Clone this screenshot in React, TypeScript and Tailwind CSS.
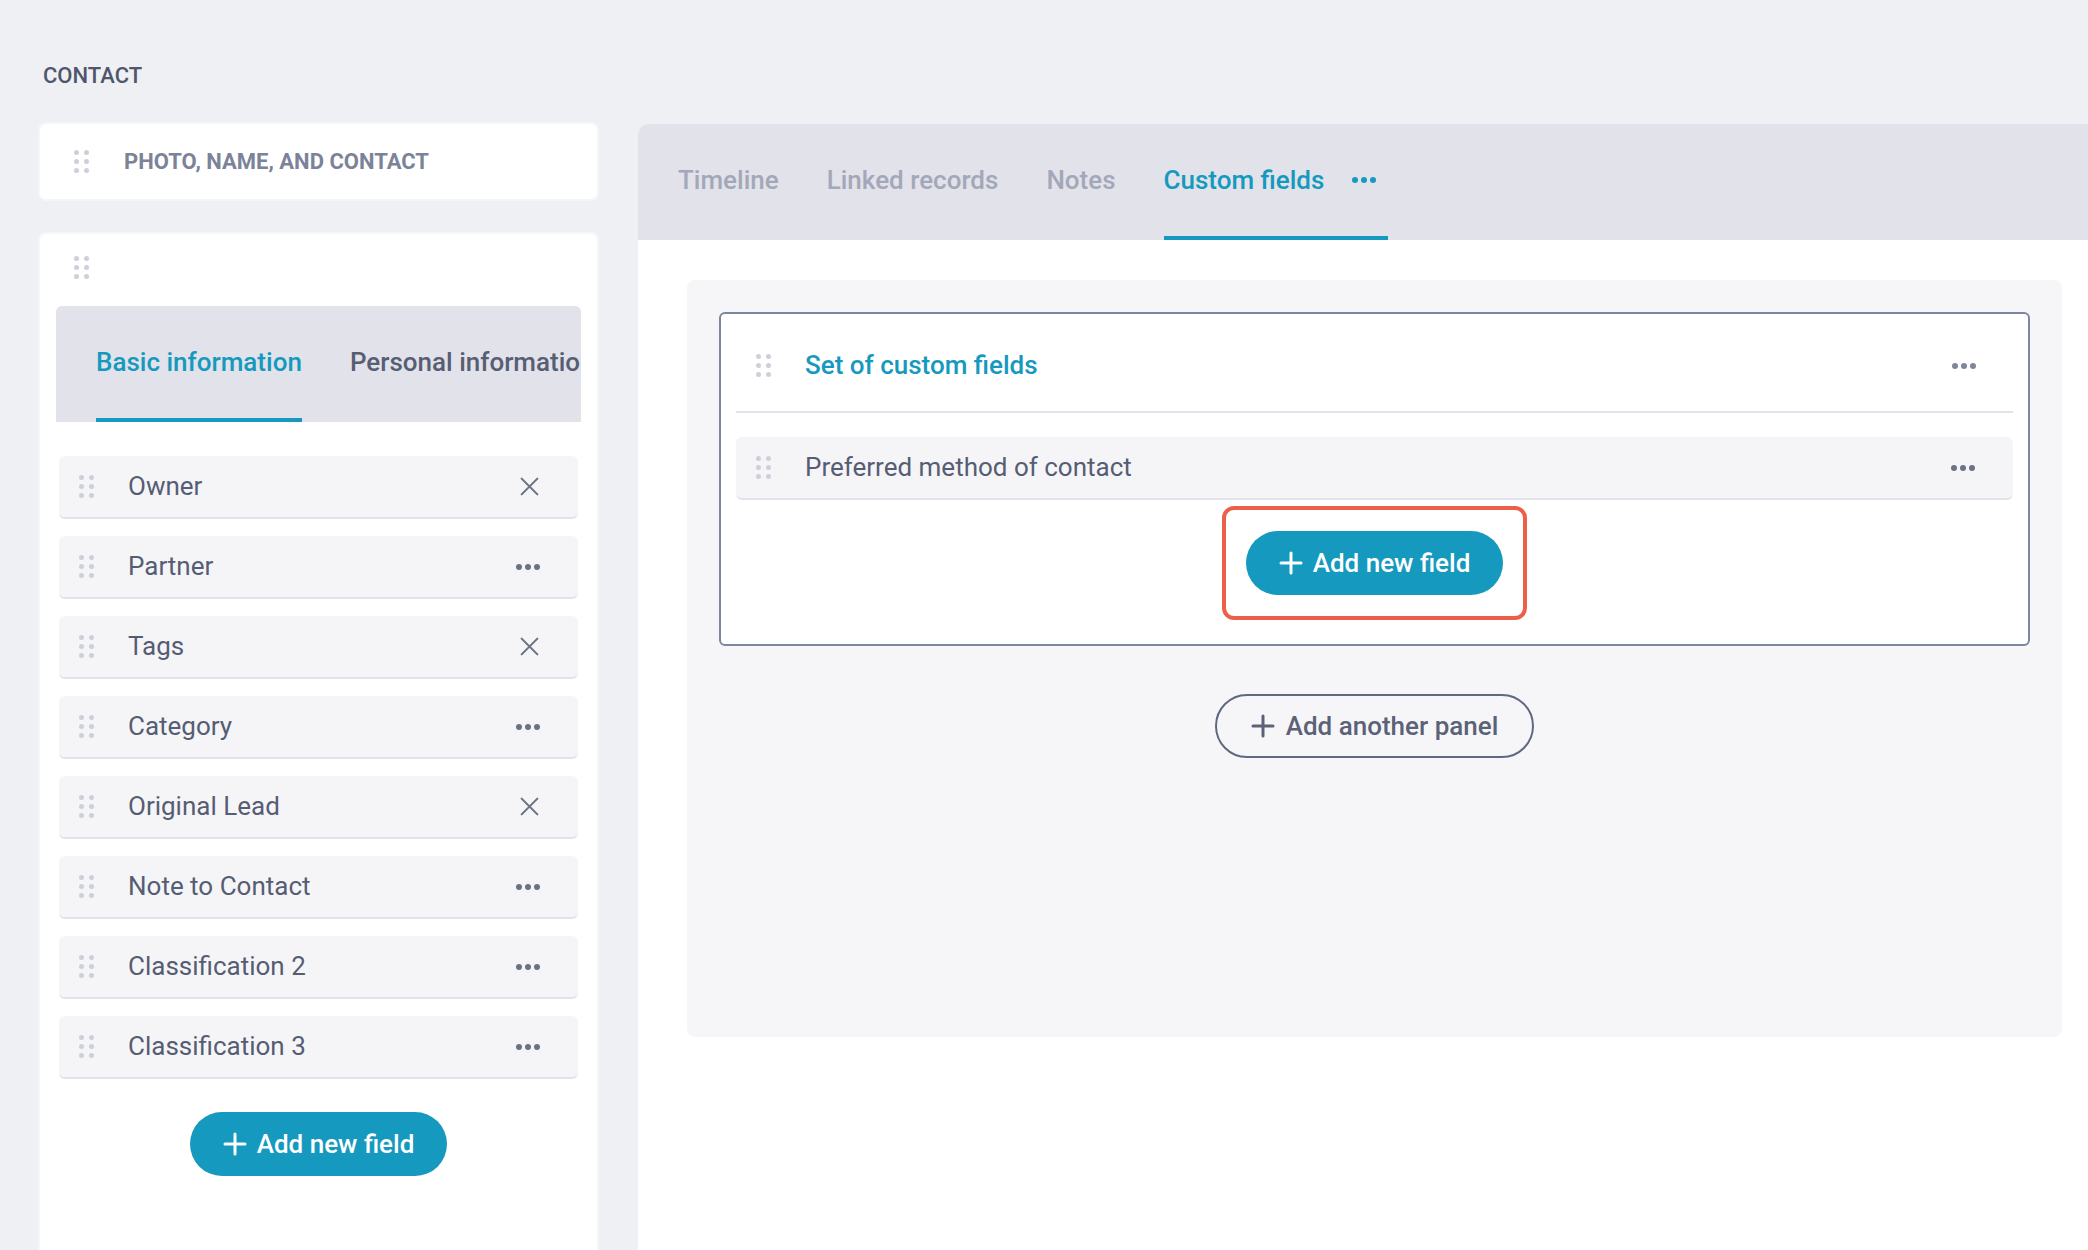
import React from "react";

type FieldAction = "close" | "more";

interface Field {
  label: string;
  action: FieldAction;
}

const basicFields: Field[] = [
  { label: "Owner", action: "close" },
  { label: "Partner", action: "more" },
  { label: "Tags", action: "close" },
  { label: "Category", action: "more" },
  { label: "Original Lead", action: "close" },
  { label: "Note to Contact", action: "more" },
  { label: "Classification 2", action: "more" },
  { label: "Classification 3", action: "more" },
];

// six-dot grip shown on every draggable block
const DragHandle = () => (
  <div className="grid w-fit shrink-0 grid-cols-2 gap-x-[5px] gap-y-[4px]">
    {[0, 1, 2, 3, 4, 5].map((i) => (
      <span key={i} className="block size-[5px] rounded-full bg-[#cdd0da]" />
    ))}
  </div>
);

// horizontal "more" menu dots
const MoreDots = ({ dotClass }: { dotClass: string }) => (
  <div className="flex shrink-0 items-center gap-[3px]">
    {[0, 1, 2].map((i) => (
      <span key={i} className={`block size-[6px] rounded-full ${dotClass}`} />
    ))}
  </div>
);

const CloseIcon = () => (
  <svg width="21" height="21" viewBox="0 0 20 20" fill="none" className="shrink-0">
    <path d="M2.5 2.5 L17.5 17.5 M17.5 2.5 L2.5 17.5" stroke="#6b7187" strokeWidth="2" strokeLinecap="round" />
  </svg>
);

const PlusIcon = ({ color }: { color: string }) => (
  <svg width="24" height="24" viewBox="0 0 24 24" fill="none" className="shrink-0">
    <path d="M12 2 V22 M2 12 H22" stroke={color} strokeWidth="3" strokeLinecap="round" />
  </svg>
);

const AddFieldButton = () => (
  <button className="flex h-16 items-center gap-[10px] rounded-full bg-[#1599be] px-[33px] text-[26px] font-medium text-white">
    <PlusIcon color="#ffffff" />
    <span>Add new field</span>
  </button>
);

const FieldRow = ({ field }: { field: Field }) => (
  <div className="flex h-[63px] items-center rounded-md border-b-2 border-[#e2e3ea] bg-[#f5f5f8] pl-5 pr-[38px]">
    <DragHandle />
    <span className="ml-[34px] flex-1 truncate text-[26px] text-[#565d73]">{field.label}</span>
    {field.action === "close" ? <CloseIcon /> : <MoreDots dotClass="bg-[#6b7288]" />}
  </div>
);

const LayoutColumn = () => (
  <div className="flex w-[557px] shrink-0 flex-col">
    <h2 className="mb-[36px] ml-[3px] h-[25px] text-[22px] font-medium leading-[25px] text-[#4f566b]">CONTACT</h2>

    <div className="flex h-[75px] shrink-0 items-center gap-[35px] rounded-md bg-white pl-[34px] shadow-[0_0_0_2px_#f5f6f9]">
      <DragHandle />
      <span className="text-[22px] font-bold text-[#7c8398]">PHOTO, NAME, AND CONTACT</span>
    </div>

    <div className="mt-[35px] flex-1 rounded-t-md bg-white px-4 pt-[22px] shadow-[0_0_0_2px_#f5f6f9]">
      <div className="pl-[18px]">
        <DragHandle />
      </div>

      {/* section tabs */}
      <div className="mt-[27px] flex h-[116px] gap-12 overflow-hidden rounded-t-md bg-[#e1e2ea] pl-10">
        <div className="flex shrink-0 items-center whitespace-nowrap border-b-4 border-[#1599be] text-[26px] font-medium text-[#1599be]">
          Basic information
        </div>
        <div className="flex shrink-0 items-center whitespace-nowrap border-b-4 border-transparent text-[26px] font-medium text-[#575e74]">
          Personal information
        </div>
      </div>

      <div className="mt-[34px] flex flex-col gap-[17px] px-[3px]">
        {basicFields.map((field) => (
          <FieldRow key={field.label} field={field} />
        ))}
      </div>

      <div className="mt-[33px] flex justify-center">
        <AddFieldButton />
      </div>
    </div>
  </div>
);

const tabs = ["Timeline", "Linked records", "Notes"];

const CustomFieldsPanel = () => (
  <div className="w-full rounded-md border-2 border-[#7c869e] bg-white px-[15px] pb-6">
    <div className="flex h-[97px] items-center pl-5 pr-[37px] pt-[6px]">
      <DragHandle />
      <span className="ml-[34px] flex-1 text-[26px] font-medium text-[#1599be]">Set of custom fields</span>
      <MoreDots dotClass="bg-[#7f869b]" />
    </div>
    <div className="h-[2px] bg-[#e2e3ea]" />

    <div className="mt-6">
      <FieldRow field={{ label: "Preferred method of contact", action: "more" }} />
    </div>

    <div className="mt-[6px] flex justify-center">
      <div className="rounded-[12px] border-4 border-[#ec5f48] px-5 py-[21px]">
        <AddFieldButton />
      </div>
    </div>
  </div>
);

const DetailPanel = () => (
  <div className="mt-[61px] flex flex-1 flex-col overflow-hidden rounded-tl-[10px] bg-white">
    <div className="flex h-[116px] shrink-0 gap-12 bg-[#e1e2ea] pl-10">
      {tabs.map((tab) => (
        <div
          key={tab}
          className="flex items-center whitespace-nowrap border-b-4 border-transparent text-[26px] font-medium text-[#a3a8b9]"
        >
          {tab}
        </div>
      ))}
      <div className="flex items-center gap-[28px] whitespace-nowrap border-b-4 border-[#1599be] pr-3 text-[26px] font-medium text-[#1599be]">
        <span>Custom fields</span>
        <MoreDots dotClass="bg-[#1599be]" />
      </div>
    </div>

    <div className="pl-[49px] pr-[26px] pt-[40px]">
      <div className="flex h-[757px] flex-col items-center rounded-lg bg-[#f6f6f9] p-8">
        <CustomFieldsPanel />
        <button className="mt-12 flex h-16 items-center gap-[11px] rounded-full border-2 border-[#5f6781] px-[34px] text-[26px] font-medium text-[#5b6277]">
          <PlusIcon color="#5b6277" />
          <span>Add another panel</span>
        </button>
      </div>
    </div>
  </div>
);

export default function App() {
  return (
    <div className="h-screen w-full overflow-hidden bg-[#eff0f4] pl-10 pt-[63px] font-['Roboto',sans-serif]">
      <div className="flex h-full gap-[41px]">
        <LayoutColumn />
        <DetailPanel />
      </div>
    </div>
  );
}
